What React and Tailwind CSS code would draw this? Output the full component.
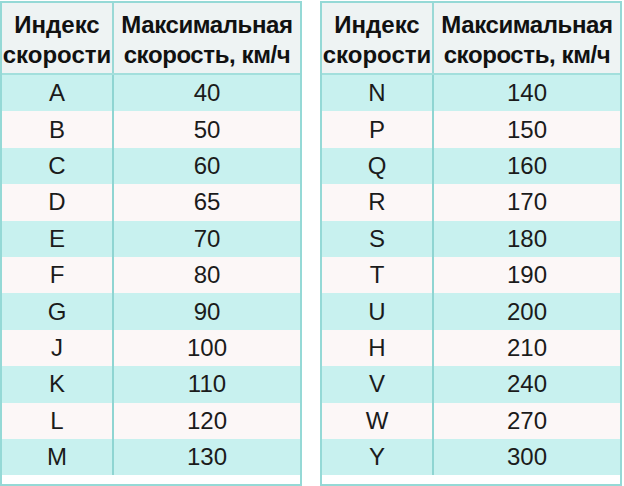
const left = [
  ["A", "40"], ["B", "50"], ["C", "60"], ["D", "65"], ["E", "70"], ["F", "80"],
  ["G", "90"], ["J", "100"], ["K", "110"], ["L", "120"], ["M", "130"],
];
const right = [
  ["N", "140"], ["P", "150"], ["Q", "160"], ["R", "170"], ["S", "180"], ["T", "190"],
  ["U", "200"], ["H", "210"], ["V", "240"], ["W", "270"], ["Y", "300"],
];

function SpeedTable({ rows }) {
  return (
    <div className="w-[302px] shrink-0 border-x-2 border-t-2 border-b-2 border-[#95d9d6]">
      <div className="grid grid-cols-[112px_1fr] bg-[#eef3f3] border-b-2 border-[#a3dfdc] h-[72px]">
        <div className="flex flex-col items-center justify-center pt-1 border-r-2 border-[#9ad9d6] text-[24px] font-bold leading-[30px] text-[#111]">
          <span>Индекс</span>
          <span>скорости</span>
        </div>
        <div className="flex flex-col items-center justify-center pt-1 text-[24px] font-bold leading-[30px] text-[#111] tracking-[-0.4px]">
          <span>Максимальная</span>
          <span>скорость, км/ч</span>
        </div>
      </div>
      {rows.map(([idx, speed], i) => (
        <div
          key={idx}
          className={
            "grid grid-cols-[112px_1fr] h-[36.4px] text-[24px] leading-none text-[#1b1b1b] " +
            (i % 2 === 0 ? "bg-[#c8f1ef]" : "bg-[#fcf7f7]")
          }
        >
          <div className="flex items-center justify-center border-r-2 border-[#8fd5d2]">{idx}</div>
          <div className="flex items-center justify-center">{speed}</div>
        </div>
      ))}
    </div>
  );
}

export default function App() {
  return (
    <div
      className="w-[624px] h-[486px] bg-white overflow-hidden flex gap-[18px] pt-px"
      style={{ fontFamily: '"Liberation Sans", Arial, sans-serif' }}
    >
      <SpeedTable rows={left} />
      <SpeedTable rows={right} />
    </div>
  );
}
